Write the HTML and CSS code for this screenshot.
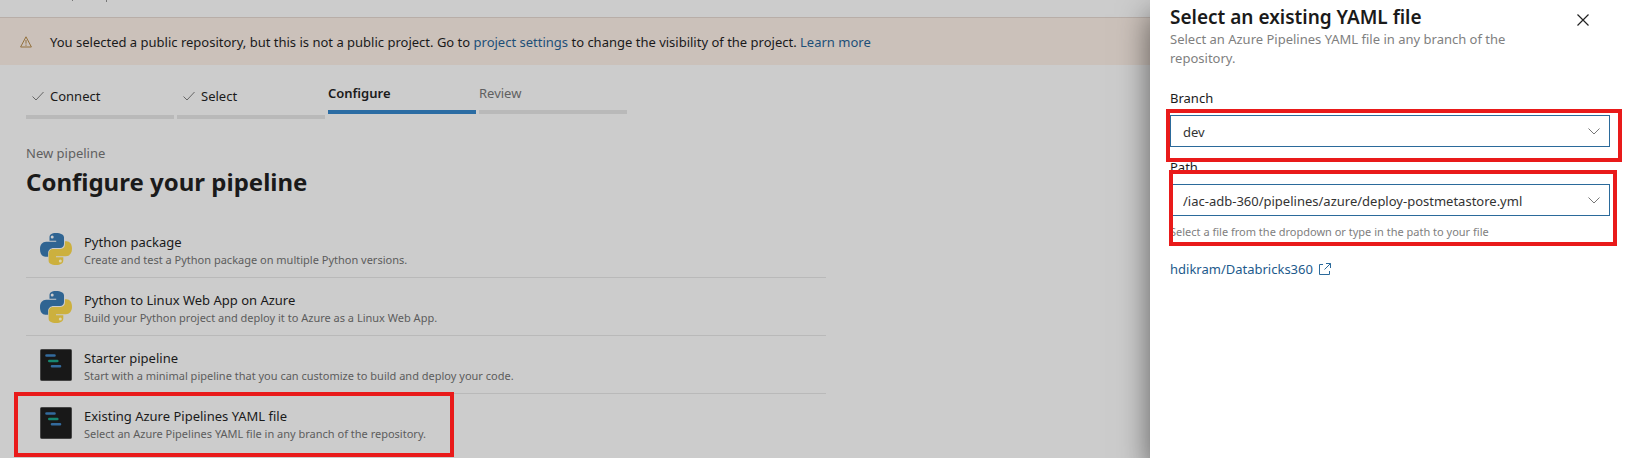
FILE: index.html
```
<!DOCTYPE html>
<html lang="en">
<head>
<meta charset="utf-8">
<title>Configure your pipeline</title>
<link rel="stylesheet" href="styles.css">
</head>
<body>
<svg class="defs" aria-hidden="true">
  <symbol id="python" viewBox="0 0 32 32">
    <path fill="#2f6492" d="M15.9 0C11.500 0 9.500 1.700 9.500 4.500V7.700H16.200V8.800H6.200C2.500 8.800 0 11.600 0 16.200C0 20.800 2.200 23.700 5.500 23.700H8.100V20.200C8.100 17 10.600 14.900 13.500 14.900H20C22.500 14.900 24 13.100 24 10.900V4.500C24 1.600 20.800 0 15.900 0Z"/>
    <circle cx="12.200" cy="4" r="1.500" fill="#ccc"/>
    <path fill="#ccb03e" d="M16.100 32C20.500 32 23.300 30.300 23.300 27.500V24.300H16V23.200H25.800C29.500 23.200 32 20.400 32 15.800C32 11.200 29.800 8.300 26.500 8.300H24.900V11.800C24.900 15 22.400 16.100 19.500 16.100H13C10.500 16.100 8.600 18 8.600 20.500V27.500C8.600 30.400 11.200 32 16.100 32Z"/>
    <circle cx="20.300" cy="28" r="1.500" fill="#ddd5ad"/>
  </symbol>
  <symbol id="pipe" viewBox="0 0 32 32">
    <rect x=".5" y=".5" width="31" height="31" rx="1" fill="#181818" stroke="#444"/>
    <g stroke-width="2.600" stroke-linecap="round">
      <path stroke="#336b9d" d="M6.500 6.500h8M12 17.300h8"/>
      <path stroke="#178670" d="M9.300 12h8"/>
    </g>
  </symbol>
  <symbol id="check" viewBox="0 0 12 10">
    <path fill="none" stroke="#666" d="M.5 5.500 4 9 11.500 1"/>
  </symbol>
</svg>

<main class="page">
  <div class="topbar"><svg viewBox="0 0 40 2"><path fill="#777" d="M0 0h1v1H0zM34 0h1v2h-1z"/></svg></div>
  <div class="banner">
    <svg class="warn" viewBox="0 0 12 12"><path fill="none" stroke="#93713d" stroke-linejoin="round" d="M6 .8.6 11h10.800ZM6 4v3.700M6 8.500v1.300"/></svg>
    <p>You selected a public repository, but this is not a public project. Go to <a href="#">project settings</a> to change the visibility of the project. <a href="#">Learn more</a></p>
  </div>

  <ol class="steps">
    <li class="step done"><svg><use href="#check"/></svg>Connect</li>
    <li class="step done"><svg><use href="#check"/></svg>Select</li>
    <li class="step current">Configure</li>
    <li class="step">Review</li>
  </ol>

  <header class="heading">
    <p>New pipeline</p>
    <h1>Configure your pipeline</h1>
  </header>

  <ul class="templates">
    <li><svg><use href="#python"/></svg><div><h2>Python package</h2><p>Create and test a Python package on multiple Python versions.</p></div></li>
    <li><svg><use href="#python"/></svg><div><h2>Python to Linux Web App on Azure</h2><p>Build your Python project and deploy it to Azure as a Linux Web App.</p></div></li>
    <li><svg><use href="#pipe"/></svg><div><h2>Starter pipeline</h2><p>Start with a minimal pipeline that you can customize to build and deploy your code.</p></div></li>
    <li class="marked"><svg><use href="#pipe"/></svg><div><h2>Existing Azure Pipelines YAML file</h2><p>Select an Azure Pipelines YAML file in any branch of the repository.</p></div></li>
  </ul>
</main>

<aside class="drawer">
  <div class="drawer-head">
    <div>
      <h2>Select an existing YAML file</h2>
      <p>Select an Azure Pipelines YAML file in any branch of the repository.</p>
    </div>
    <button class="close" aria-label="Close"><svg viewBox="0 0 12 12"><path stroke="#222" stroke-width="1.200" d="m.5.5 11 11M11.500.5l-11 11"/></svg></button>
  </div>
  <div class="field branch">
    <label for="branch">Branch</label>
    <div class="combo">
      <select id="branch"><option>dev</option></select>
      <svg viewBox="0 0 12 7"><path fill="none" stroke="#777" d="m.5.5 5.500 5.500L11.500.5"/></svg>
    </div>
  </div>
  <div class="field path">
    <label for="path">Path</label>
    <div class="combo">
      <input id="path" type="text" value="/iac-adb-360/pipelines/azure/deploy-postmetastore.yml">
      <svg viewBox="0 0 12 7"><path fill="none" stroke="#777" d="m.5.5 5.500 5.500L11.500.5"/></svg>
    </div>
    <small>Select a file from the dropdown or type in the path to your file</small>
  </div>
  <a class="repo" href="#">hdikram/Databricks360<svg viewBox="0 0 12 12"><path fill="none" stroke="#2b6a9b" d="M4 1.500H.5v10h10V8M7 .5h4.500V5M11.500.5l-6 6"/></svg></a>
</aside>
</body>
</html>
```
FILE: styles.css
```
* { box-sizing: border-box; }
body, h1, h2, p, ol, ul { margin: 0; padding: 0; }
ol, ul { list-style: none; }
body {
  display: flex;
  min-height: 100vh;
  overflow: hidden;
  background: #ccc;
  color: #1a1a1a;
  font: 13px/20px "Noto Sans", "Open Sans", sans-serif;
}
a { color: #1d4f78; text-decoration: none; }
svg { flex: none; }
.defs { position: absolute; width: 0; height: 0; }

.page { flex: 1; min-width: 0; }
.topbar { height: 17px; padding-left: 72px; }
.topbar svg { display: block; width: 40px; height: 2px; }
.banner {
  display: flex;
  align-items: center;
  gap: 18px;
  height: 48px;
  padding: 0 20px;
  border-top: 1px solid #b8aea8;
  background: #cbc1ba;
}
.warn { width: 12px; height: 12px; }

.steps { display: flex; gap: 3px; padding: 18px 26px 0; }
.step {
  width: 148px;
  height: 31px;
  border-bottom: 4px solid #b9b9b9;
  color: #606060;
}
.done {
  display: flex;
  align-items: center;
  gap: 6px;
  height: 36px;
  padding: 0 6px 6px;
  color: #1a1a1a;
}
.done svg { width: 12px; height: 10px; }
.current { border-color: #2b6ca3; color: #1a1a1a; font-weight: 600; }

.heading { padding: 24px 26px 0; color: #606060; }
.heading h1 { color: #1a1a1a; font-size: 24px; line-height: 38px; font-weight: 700; }

.templates { width: 826px; padding-left: 26px; margin-top: 19px; }
.templates li {
  display: flex;
  align-items: center;
  gap: 12px;
  height: 58px;
  padding-left: 14px;
  border-bottom: 1px solid #b9b9b9;
}
.templates svg { width: 32px; height: 32px; }
.templates div { padding-top: 4px; }
.templates h2 { font-size: 13px; line-height: 18px; font-weight: 400; }
.templates p { color: #5c5c5c; font-size: 11px; line-height: 18px; }
.templates .marked { position: relative; border-bottom: 0; }
.marked::after, .branch::after, .path::after {
  content: "";
  position: absolute;
  border: 4px solid #e91a1a;
  pointer-events: none;
}
.marked::after { inset: -2px 372px -5px -12px; }

.drawer {
  width: 476px;
  padding: 4px 16px 0 20px;
  background: #fff;
  box-shadow: 0 14px 30px rgba(0, 0, 0, .55);
}
.drawer-head { display: flex; justify-content: space-between; margin-bottom: 20px; }
.drawer-head div { width: 370px; }
.drawer-head h2 { font-size: 19px; line-height: 26px; font-weight: 600; }
.drawer-head p { color: #808080; line-height: 19px; }
.close {
  width: 32px;
  height: 32px;
  margin-right: 11px;
  padding: 10px;
  border: 0;
  background: none;
}
.close svg { display: block; width: 12px; height: 12px; }

.field { position: relative; display: flex; flex-direction: column; }
.field label { height: 20px; }
.combo {
  display: flex;
  align-items: center;
  height: 32px;
  margin-top: 7px;
  padding-right: 9px;
  border: 1px solid #2b6a9b;
}
.combo select, .combo input {
  flex: 1;
  min-width: 0;
  height: 30px;
  padding: 2px 12px 0;
  border: 0;
  outline: 0;
  appearance: none;
  background: none;
  color: #333;
  font: inherit;
}
.combo svg { width: 12px; height: 7px; }
.field small { margin-top: 7px; color: #808080; font-size: 11px; line-height: 18px; }
.branch { margin-bottom: 10px; }
.branch::after { inset: 21px -12px -15px -4px; }
.path::after { inset: 13px -7px -5px -1px; }
.repo { display: flex; align-items: center; gap: 6px; margin-top: 18px; color: #1d5a8c; }
.repo svg { width: 12px; height: 12px; }
```
